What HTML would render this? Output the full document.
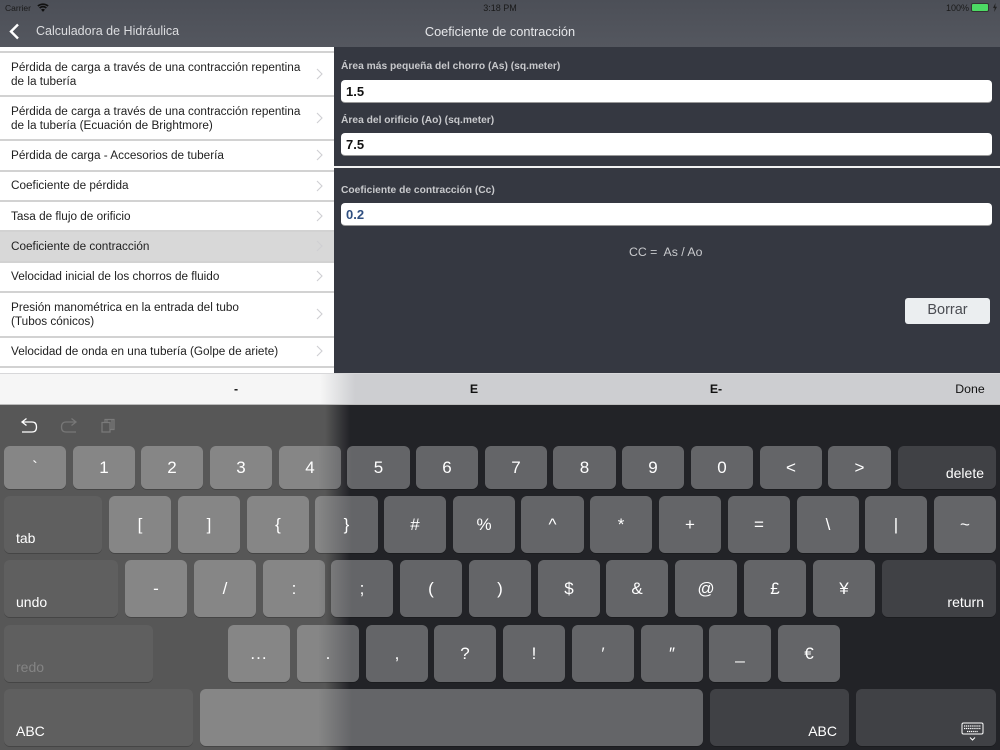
<!DOCTYPE html>
<html lang="es"><head><meta charset="utf-8"><title>Coeficiente de contracción</title>
<style>
*{box-sizing:border-box;margin:0;padding:0}
html,body{width:1000px;height:750px;overflow:hidden;background:#222327}
body{position:relative;font-family:"Liberation Sans",sans-serif}
.a{position:absolute;white-space:nowrap}
#nav{left:0;top:0;width:1000px;height:47px;background:linear-gradient(#4c4f57,#54575f)}
#list{left:0;top:47px;width:334px;height:326px;background:#fff}
.sep{position:absolute;left:0;width:334px;height:2px;background:#d2d2d2}
.r{position:absolute;left:11px;font-size:11.75px;line-height:13.5px;color:#1f1f1f;white-space:nowrap}
.ch{position:absolute;left:316px;width:7px;height:12px}
.ch path{fill:none;stroke:#cfcfd3;stroke-width:1.1}
#pane{left:334px;top:47px;width:666px;height:326px;background:#353841}
.lb{font-size:10.25px;font-weight:bold;color:#c8c9cc;left:341px}
.in{left:341px;width:651px;background:#fff;border-radius:4px;border-bottom:1px solid #999;font-weight:bold;font-size:13px;padding-left:5px;color:#111}
#bar{left:0;top:373px;width:1000px;height:32px;background:linear-gradient(90deg,#f6f6f6 320px,#cdced1 355px);border-top:1px solid #d8d8da;border-bottom:1px solid #bbb}
.t{font-size:12.3px;color:#111;top:382px;transform:translateX(-50%)}
#kb{left:0;top:405px;width:1000px;height:345px;background:linear-gradient(90deg,#575757 325px,#222327 350px)}
.k{position:absolute;border-radius:6px;color:#fff;text-align:center;font-size:17px;background:linear-gradient(90deg,#868686 318px,#646568 352px) fixed;box-shadow:0 1px 0 rgba(0,0,0,.2);white-space:nowrap}
.d{background:linear-gradient(90deg,#5f5f5f 318px,#404145 352px) fixed;font-size:14px}
.y1{top:446px;height:43px;line-height:43px}
.y2{top:496px;height:57px;line-height:57px}
.y3{top:560px;height:57px;line-height:57px}
.y4{top:625px;height:57px;line-height:57px}
.y5{top:689px;height:57px}
.k.d span{position:absolute;bottom:7px;line-height:16px}
.k.y1.d span{bottom:8px}
.l span{left:12px}.rr span{right:12px}
</style></head><body>
<div class="a" id="nav"></div>
<div class="a" style="left:5px;top:3px;font-size:8.5px;color:#1a1a1a">Carrier</div>
<svg class="a" style="left:37px;top:3px" width="12" height="9" viewBox="0 0 11 8"><path d="M5.5 8 L3.7 5.9 Q5.5 4.6 7.3 5.9Z M2.9 5 L1.9 3.9 Q5.5 1 9.1 3.9 L8.1 5 Q5.5 3 2.9 5Z M1.3 3.2 L0.3 2.1 Q5.5 -1.6 10.7 2.1 L9.7 3.2 Q5.5 .2 1.3 3.2Z" fill="#111"/></svg>
<div class="a" style="left:0;width:1000px;text-align:center;top:3px;font-size:9px;color:#1a1a1a">3:18 PM</div>
<div class="a" style="left:946px;top:3px;font-size:9px;color:#1a1a1a">100%</div>
<div class="a" style="left:971px;top:3px;width:18px;height:9px;border:1px solid #333;border-radius:2px;background:#4cd964"></div>
<svg class="a" style="left:992px;top:3px" width="6" height="9" viewBox="0 0 6 9"><path d="M3.5 0 L1 5 H2.7 L2.2 9 L5 3.8 H3.2Z" fill="#222"/></svg>
<svg class="a" style="left:9px;top:23px" width="11" height="17" viewBox="0 0 11 17"><path d="M9 1.5 L2 8.5 L9 15.5" fill="none" stroke="#fff" stroke-width="2.4"/></svg>
<div class="a" style="left:36px;top:24px;font-size:12.5px;color:#dcdde0">Calculadora de Hidráulica</div>
<div class="a" style="left:334px;width:332px;text-align:center;top:24px;font-size:12.75px;color:#e6e7ea">Coeficiente de contracción</div>

<div class="a" id="list">
<div style="position:absolute;left:0;top:184px;width:334px;height:31px;background:#d8d8d8"></div>
<div class="sep" style="top:4px"></div><div class="sep" style="top:48px"></div><div class="sep" style="top:92px"></div><div class="sep" style="top:123px"></div><div class="sep" style="top:153px"></div><div class="sep" style="top:183px"></div><div class="sep" style="top:214px"></div><div class="sep" style="top:244px"></div><div class="sep" style="top:289px"></div><div class="sep" style="top:319px"></div>
<div class="r" style="top:14px">Pérdida de carga a través de una contracción repentina<br>de la tubería</div>
<div class="r" style="top:58px">Pérdida de carga a través de una contracción repentina<br>de la tubería (Ecuación de Brightmore)</div>
<div class="r" style="top:102px">Pérdida de carga - Accesorios de tubería</div>
<div class="r" style="top:132px">Coeficiente de pérdida</div>
<div class="r" style="top:163px">Tasa de flujo de orificio</div>
<div class="r" style="top:193px">Coeficiente de contracción</div>
<div class="r" style="top:223px">Velocidad inicial de los chorros de fluido</div>
<div class="r" style="top:254px">Presión manométrica en la entrada del tubo<br>(Tubos cónicos)</div>
<div class="r" style="top:298px">Velocidad de onda en una tubería (Golpe de ariete)</div>
<svg class="ch" style="top:21px" viewBox="0 0 7 12"><path d="M1 1 L6 6 L1 11"/></svg>
<svg class="ch" style="top:65px" viewBox="0 0 7 12"><path d="M1 1 L6 6 L1 11"/></svg>
<svg class="ch" style="top:102px" viewBox="0 0 7 12"><path d="M1 1 L6 6 L1 11"/></svg>
<svg class="ch" style="top:133px" viewBox="0 0 7 12"><path d="M1 1 L6 6 L1 11"/></svg>
<svg class="ch" style="top:163px" viewBox="0 0 7 12"><path d="M1 1 L6 6 L1 11"/></svg>
<svg class="ch" style="top:193px" viewBox="0 0 7 12"><path d="M1 1 L6 6 L1 11"/></svg>
<svg class="ch" style="top:223px" viewBox="0 0 7 12"><path d="M1 1 L6 6 L1 11"/></svg>
<svg class="ch" style="top:261px" viewBox="0 0 7 12"><path d="M1 1 L6 6 L1 11"/></svg>
<svg class="ch" style="top:298px" viewBox="0 0 7 12"><path d="M1 1 L6 6 L1 11"/></svg>
</div>

<div class="a" id="pane"></div>
<div class="a lb" style="top:61px">Área más pequeña del chorro (As) (sq.meter)</div>
<div class="a in" style="top:80px;height:23px;line-height:23px">1.5</div>
<div class="a lb" style="top:115px">Área del orificio (Ao) (sq.meter)</div>
<div class="a in" style="top:133px;height:23px;line-height:23px">7.5</div>
<div class="a" style="left:334px;top:166px;width:666px;height:2px;background:#f2f2f2"></div>
<div class="a lb" style="top:185px">Coeficiente de contracción (Cc)</div>
<div class="a in" style="top:203px;height:23px;line-height:23px;color:#2f4f80">0.2</div>
<div class="a" style="left:629px;top:245px;font-size:12.3px;color:#c9cacd;white-space:pre">CC =  As / Ao</div>
<div class="a" style="left:905px;top:298px;width:85px;height:26px;background:#ebeef0;border-radius:3px;text-align:center;line-height:25px;font-size:14.5px;color:#4a4c52">Borrar</div>

<div class="a" id="bar"></div>
<div class="a t" style="left:236px;font-weight:bold">-</div>
<div class="a t" style="left:474px;font-weight:bold">E</div>
<div class="a t" style="left:716px;font-weight:bold">E-</div>
<div class="a t" style="left:970px">Done</div>

<div class="a" id="kb"></div>
<svg class="a" style="left:20px;top:417px" width="18" height="17" viewBox="0 0 18 17"><path d="M2 5 H12 Q16.5 5 16.5 10 Q16.5 15 12 15 H2 M6.5 1.5 L2 5 L6.5 8.5" fill="none" stroke="#fff" stroke-width="1.3"/></svg>
<svg class="a" style="left:60px;top:417px" width="18" height="17" viewBox="0 0 18 17"><path d="M16 5 H6 Q1.5 5 1.5 10 Q1.5 15 6 15 H16 M11.5 1.5 L16 5 L11.5 8.5" fill="none" stroke="#777" stroke-width="1.3"/></svg>
<svg class="a" style="left:100px;top:417px" width="16" height="17" viewBox="0 0 16 17"><path d="M2 5.5 H10 V15 H2Z M5 5 V2.5 H14 V12.5 H10.5 M7 2.5 V5 M12 2.5 V12" fill="none" stroke="#7a7a7a" stroke-width="1.2"/></svg>

<div class="k y1" style="left:4px;width:62px">`</div>
<div class="k y1" style="left:73px;width:62px">1</div>
<div class="k y1" style="left:141px;width:62px">2</div>
<div class="k y1" style="left:210px;width:62px">3</div>
<div class="k y1" style="left:279px;width:62px">4</div>
<div class="k y1" style="left:347px;width:63px">5</div>
<div class="k y1" style="left:416px;width:62px">6</div>
<div class="k y1" style="left:485px;width:62px">7</div>
<div class="k y1" style="left:553px;width:63px">8</div>
<div class="k y1" style="left:622px;width:62px">9</div>
<div class="k y1" style="left:691px;width:62px">0</div>
<div class="k y1" style="left:760px;width:62px">&lt;</div>
<div class="k y1" style="left:828px;width:63px">&gt;</div>
<div class="k y1 d rr" style="left:898px;width:98px"><span>delete</span></div>

<div class="k y2 d l" style="left:4px;width:98px"><span>tab</span></div>
<div class="k y2" style="left:109px;width:62px">[</div>
<div class="k y2" style="left:178px;width:62px">]</div>
<div class="k y2" style="left:247px;width:62px">{</div>
<div class="k y2" style="left:315px;width:63px">}</div>
<div class="k y2" style="left:384px;width:62px">#</div>
<div class="k y2" style="left:453px;width:62px">%</div>
<div class="k y2" style="left:521px;width:63px">^</div>
<div class="k y2" style="left:590px;width:62px">*</div>
<div class="k y2" style="left:659px;width:62px">+</div>
<div class="k y2" style="left:728px;width:62px">=</div>
<div class="k y2" style="left:797px;width:62px">\</div>
<div class="k y2" style="left:865px;width:62px">|</div>
<div class="k y2" style="left:934px;width:62px">~</div>

<div class="k y3 d l" style="left:4px;width:114px"><span>undo</span></div>
<div class="k y3" style="left:125px;width:62px">-</div>
<div class="k y3" style="left:194px;width:62px">/</div>
<div class="k y3" style="left:263px;width:62px">:</div>
<div class="k y3" style="left:331px;width:62px">;</div>
<div class="k y3" style="left:400px;width:62px">(</div>
<div class="k y3" style="left:469px;width:62px">)</div>
<div class="k y3" style="left:538px;width:62px">$</div>
<div class="k y3" style="left:606px;width:62px">&amp;</div>
<div class="k y3" style="left:675px;width:62px">@</div>
<div class="k y3" style="left:744px;width:62px">£</div>
<div class="k y3" style="left:813px;width:62px">¥</div>
<div class="k y3 d rr" style="left:882px;width:114px"><span>return</span></div>

<div class="k y4 d l" style="left:4px;width:149px;color:#848484"><span>redo</span></div>
<div class="k y4" style="left:228px;width:62px;letter-spacing:1px">...</div>
<div class="k y4" style="left:297px;width:62px">.</div>
<div class="k y4" style="left:366px;width:62px">,</div>
<div class="k y4" style="left:434px;width:62px">?</div>
<div class="k y4" style="left:503px;width:62px">!</div>
<div class="k y4" style="left:572px;width:62px">′</div>
<div class="k y4" style="left:641px;width:62px">″</div>
<div class="k y4" style="left:709px;width:62px">_</div>
<div class="k y4" style="left:778px;width:62px">€</div>

<div class="k y5 d l" style="left:4px;width:189px"><span>ABC</span></div>
<div class="k y5" style="left:200px;width:503px"></div>
<div class="k y5 d rr" style="left:710px;width:139px"><span>ABC</span></div>
<div class="k y5 d" style="left:856px;width:140px"></div>
<svg class="a" style="left:961px;top:722px" width="24" height="20" viewBox="0 0 24 20"><rect x="1" y="1" width="21" height="11" rx="1.5" fill="none" stroke="#fff" stroke-width="1"/><path d="M3 4 H20 M3 6.5 H20 M6 9.5 H17" stroke="#fff" stroke-width="1.2" stroke-dasharray="1.2 .7" fill="none"/><path d="M9 15.5 L11.5 18 L14 15.5" fill="none" stroke="#fff" stroke-width="1"/></svg>
</body></html>
